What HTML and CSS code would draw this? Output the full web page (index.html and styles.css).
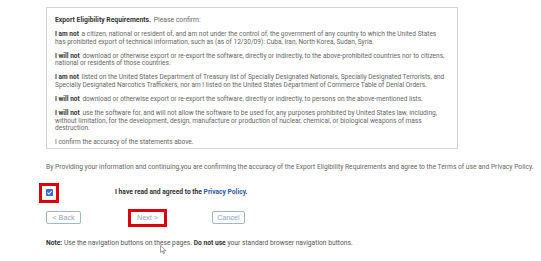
FILE: index.html
```html
<!DOCTYPE html>
<html lang="en">
<head>
<meta charset="utf-8">
<title>Export Eligibility</title>
<link rel="stylesheet" href="styles.css">
</head>
<body>
<div class="page">
  <div class="box">
    <p class="title"><b>Export Eligibility Requirements.</b> Please confirm:</p>
    <p><b>I am not</b> a citizen, national or resident of, and am not under the control of, the government of any country to which the United States<br>has prohibited export of technical information, such as (as of 12/30/09): Cuba, Iran, North Korea, Sudan, Syria.</p>
    <p><b>I will not</b> download or otherwise export or re-export the software, directly or indirectly, to the above-prohibited countries nor to citizens, national or residents of those countries.</p>
    <p><b>I am not</b> listed on the United States Department of Treasury list of Specially Designated Nationals, Specially Designated Terrorists, and Specially Designated Narcotics Traffickers, nor am I listed on the United States Department of Commerce Table of Denial Orders.</p>
    <p><b>I will not</b> download or otherwise export or re-export the software, directly or indirectly, to persons on the above-mentioned lists.</p>
    <p><b>I will not</b> use the software for, and will not allow the software to be used for, any purposes prohibited by United States law, including, without limitation, for the development, design, manufacture or production of nuclear, chemical, or biological weapons of mass destruction.</p>
    <p>I confirm the accuracy of the statements above.</p>
  </div>
  <p class="consent">By Providing your information and continuing,you are confirming the accuracy of the Export Eligibility Requirements and agree to the Terms of use and Privacy Policy.</p>
  <div class="agree-row">
    <span class="mark mark-cb"><span class="cb"><svg viewBox="0 0 8 8" width="7" height="7"><path d="M1.6 4.1 L3.3 5.7 L6.5 2.3" fill="none" stroke="#fff" stroke-width="1.2"/></svg></span></span>
    <span class="agree-text">I have read and agreed to the <a class="link" href="#">Privacy Policy</a>.</span>
  </div>
  <div class="btn-row">
    <span class="btn btn-back">&lt; Back</span>
    <span class="mark mark-next"><span class="btn btn-next">Next &gt;</span></span>
    <span class="btn btn-cancel">Cancel</span>
  </div>
  <p class="note"><b>Note:</b> Use the navigation buttons on these pages. <b>Do not use</b> your standard browser navigation buttons.</p>
  <svg class="cursor" viewBox="0 0 8 12" width="7" height="10"><path d="M0.5 0.5 L0.5 9 L2.6 7.2 L4 10.5 L5.3 9.9 L3.9 6.8 L6.7 6.8 Z" fill="#fff" stroke="#555" stroke-width="0.7"/></svg>
</div>
</body>
</html>
```
FILE: styles.css
```css
html, body {
  margin: 0;
  padding: 0;
  background: #fff;
}
.page {
  position: relative;
  width: 541px;
  height: 261px;
  padding: 7px 0 0 46px;
  box-sizing: border-box;
  font-family: Roboto, "Liberation Sans", sans-serif;
  font-size: 6.7px;
  line-height: 7.7px;
  color: #666;
}
.box {
  width: 412px;
  height: 142px;
  box-sizing: border-box;
  border: 1px solid #d4d4d4;
  padding: 9px 4px 0 8px;
  overflow: hidden;
  font-size: 6.55px;
  line-height: 7.6px;
}
.box p {
  margin: 0 0 6.5px 0;
}
.box p:last-child {
  margin-bottom: 0;
}
.box p.title {
  margin-bottom: 6.4px;
  font-size: 6.8px;
}
.box b {
  margin-right: 1px;
}
b {
  color: #333;
  font-weight: 700;
}
.consent {
  margin: 15px 0 0 0;
  color: #666;
}
.agree-row {
  display: flex;
  align-items: center;
  margin: 11px 0 0 -7px;
  height: 20px;
}
.mark {
  border: 3px solid #e0000b;
  box-sizing: border-box;
  display: flex;
  align-items: center;
  justify-content: center;
}
.mark-cb {
  width: 20px;
  height: 20px;
}
.cb {
  width: 7px;
  height: 7px;
  background: #2f6fd6;
  border-radius: 1px;
  display: flex;
}
.agree-text {
  margin-left: 56px;
  font-weight: 700;
  color: #333;
}
.link {
  color: #2d5aa8;
  text-decoration: none;
}
.btn-row {
  display: flex;
  align-items: center;
  margin-top: 6px;
  height: 18px;
}
.btn {
  display: flex;
  align-items: center;
  justify-content: center;
  height: 13px;
  box-sizing: border-box;
  border: 1px solid #9fb8cf;
  border-radius: 2px;
  color: #8ea3c0;
  font-family: "Liberation Sans", Arial, sans-serif;
  font-size: 7.2px;
  background: #fff;
}
.btn-back {
  width: 35px;
}
.mark-next {
  margin-left: 47px;
  width: 39px;
  height: 18px;
}
.btn-next {
  width: 33px;
  height: 12px;
  border: none;
}
.btn-cancel {
  margin-left: 45px;
  width: 33px;
}
.note {
  margin: 13px 0 0 0;
  color: #555;
}
.cursor {
  position: absolute;
  left: 160px;
  top: 245px;
}
```
